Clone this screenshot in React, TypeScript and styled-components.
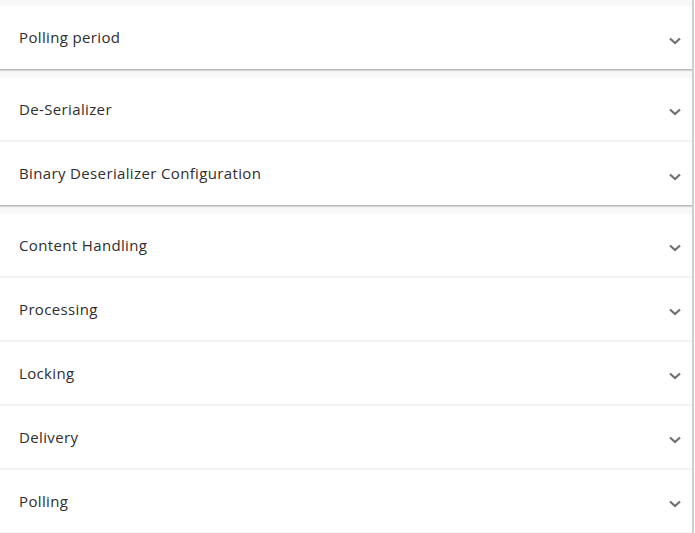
import { createGlobalStyle, styled } from 'styled-components'

const GlobalStyle = createGlobalStyle`
    html, body {
        margin: 0;
        padding: 0;
        background: #ffffff;
        font-family: "Open Sans", "Liberation Sans", sans-serif;
    }
`

const Frame = styled.div`
    width: 692px;
    height: 533px;
    overflow: hidden;
    background: #f7f7f7;
    border-right: 2px solid #cfcfcf;
    padding-top: 6px;
    box-sizing: content-box;
`

const Panel = styled.div<{ $open?: boolean }>`
    background: #ffffff;
    height: 64px;
    margin-bottom: ${(p) => (p.$open ? '8px' : '0')};
    border-bottom: ${(p) => (p.$open ? '1px solid #b9b9b9' : '2px solid #f3f3f3')};
    box-shadow: ${(p) => (p.$open ? '0 1px 1px rgba(0, 0, 0, 0.12)' : 'none')};
    box-sizing: border-box;
    display: flex;
    align-items: center;
    justify-content: space-between;
    padding: 0 10px 0 19px;
`

const Title = styled.span`
    font-size: 15px;
    font-weight: 500;
    color: #2e2e2e;
    letter-spacing: 0.36px;
    margin-top: -1px;
`

const Chevron = styled.svg`
    width: 14px;
    height: 12px;
    margin-top: 6px;
    color: #707070;
`

const sections = [
    { title: 'Polling period', open: true },
    { title: 'De-Serializer' },
    { title: 'Binary Deserializer Configuration', open: true },
    { title: 'Content Handling' },
    { title: 'Processing' },
    { title: 'Locking' },
    { title: 'Delivery' },
    { title: 'Polling' },
]

function App() {
    return (
        <>
            <GlobalStyle />
            <Frame>
                {sections.map((s) => (
                    <Panel key={s.title} $open={s.open}>
                        <Title>{s.title}</Title>
                        <Chevron viewBox="0 0 14 12" fill="none">
                            <path d="M2 3.5 L7 8 L12 3.5" stroke="currentColor" strokeWidth="2.2" />
                        </Chevron>
                    </Panel>
                ))}
            </Frame>
        </>
    )
}

export default App
